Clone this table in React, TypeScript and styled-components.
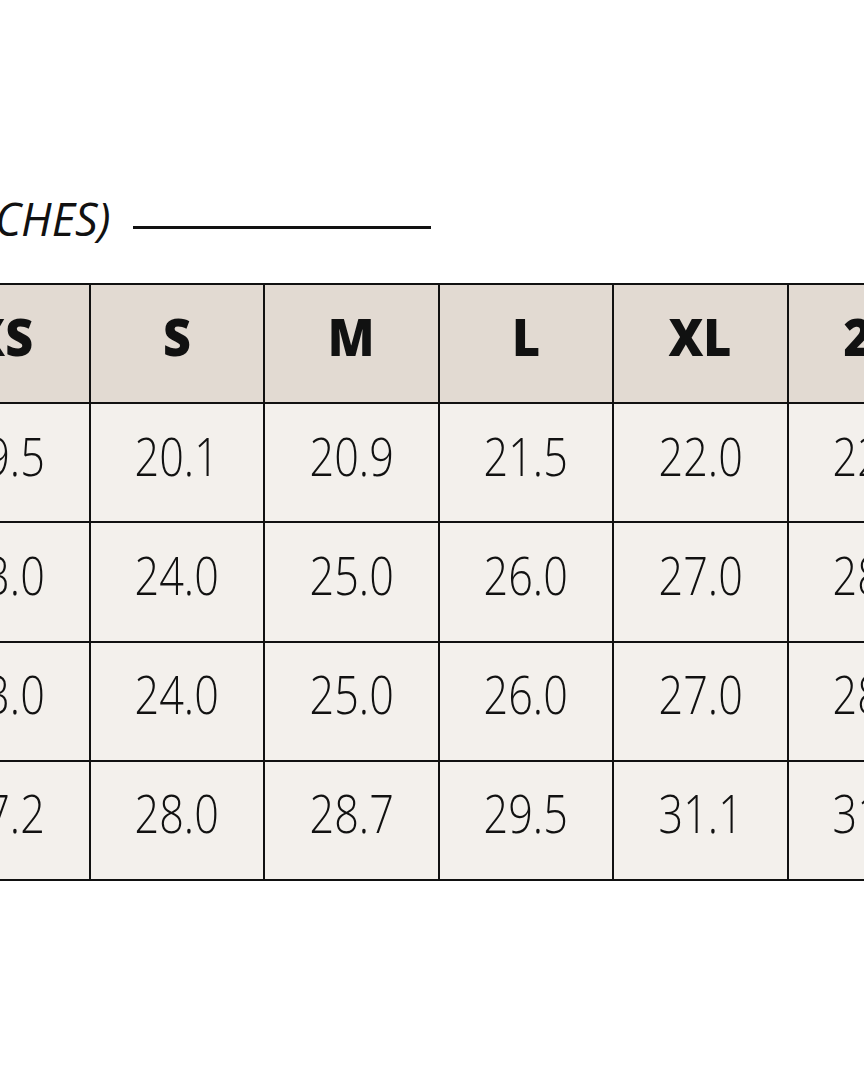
import React from "react";
import styled, { createGlobalStyle } from "styled-components";

const GlobalStyle = createGlobalStyle`
    html, body {
        margin: 0;
        padding: 0;
        background: #ffffff;
        overflow: hidden;
    }
`;

const fontStack = `"Open Sans", "Liberation Sans", Arial, sans-serif`;

const Page = styled.div`
    width: 1300px;
    margin-left: -86px;
    padding-top: 196px;
    font-family: ${fontStack};
    color: #111111;
`;

const TitleRow = styled.div`
    display: flex;
    align-items: center;
    gap: 23px;
    padding-left: 24px;
    height: 62px;
    margin-bottom: 25px;
`;

const Title = styled.h2`
    margin: 0 0 18px;
    font-size: 45px;
    font-weight: 400;
    font-style: italic;
    line-height: 1;
    white-space: nowrap;
`;

const Rule = styled.div`
    width: 298px;
    height: 3px;
    background: #111111;
`;

const Grid = styled.div<{ $cols: number }>`
    display: inline-grid;
    grid-template-columns: repeat(${({ $cols }) => $cols}, 172.5px);
    grid-auto-rows: 117.2px;
    gap: 2px;
    padding: 2px;
    background: #111111;
`;

const Cell = styled.div<{ $head?: boolean }>`
    display: flex;
    align-items: center;
    justify-content: center;
    padding-bottom: 16px;
    box-sizing: border-box;
    background: ${({ $head }) => ($head ? "#e2dad2" : "#f3f0ec")};
    font-size: ${({ $head }) => ($head ? "52px" : "54px")};
    font-weight: ${({ $head }) => ($head ? 800 : 300)};
`;

// the reference face is narrower than Open Sans, so squeeze the glyphs a little
const Glyphs = styled.span<{ $squeeze: number }>`
    display: inline-block;
    transform: scaleX(${({ $squeeze }) => $squeeze});
    white-space: nowrap;
`;

const sizes = ["XS", "S", "M", "L", "XL", "2X", "3X"];

const rows = [
    ["19.5", "20.1", "20.9", "21.5", "22.0", "22.5", "23.0"],
    ["23.0", "24.0", "25.0", "26.0", "27.0", "28.0", "29.0"],
    ["23.0", "24.0", "25.0", "26.0", "27.0", "28.0", "29.0"],
    ["27.2", "28.0", "28.7", "29.5", "31.1", "31.9", "32.7"],
];

const SizeTable = () => (
    <Grid $cols={sizes.length}>
        {sizes.map((s) => (
            <Cell $head key={s}>
                <Glyphs $squeeze={0.93}>{s}</Glyphs>
            </Cell>
        ))}
        {rows.map((row, r) =>
            row.map((v, c) => (
                <Cell key={r + "_" + c}>
                    <Glyphs $squeeze={0.8}>{v}</Glyphs>
                </Cell>
            ))
        )}
    </Grid>
);

export default function App() {
    return (
        <>
            <GlobalStyle />
            <Page>
                <TitleRow>
                    <Title>(INCHES)</Title>
                    <Rule />
                </TitleRow>
                <SizeTable />
            </Page>
        </>
    );
}
